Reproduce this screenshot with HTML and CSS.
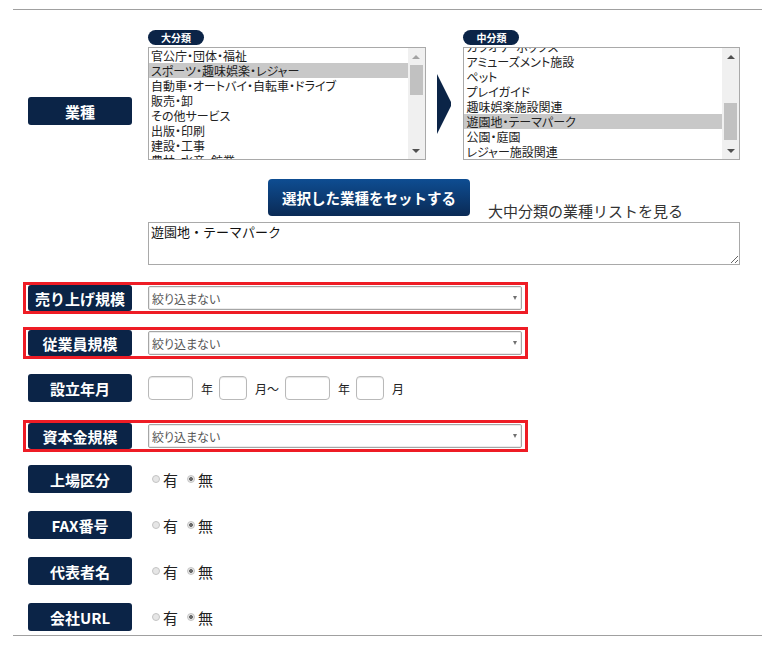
FILE: index.html
```html
<!DOCTYPE html>
<html lang="ja">
<head>
    <meta charset="UTF-8">
    <title>企業検索 条件</title>
    <link rel="stylesheet" href="styles.css">
</head>
<body>
    <form class="search-form">
        <!-- 業種 -->
        <div class="industry">
            <div class="field-label industry-label">業種</div>
            <div class="industry-body">
                <div class="lists">
                    <div class="list-group">
                        <span class="badge">大分類</span>
                        <div class="listbox">
                            <ul class="options">
                                <li>官公庁・団体・福祉</li>
                                <li class="selected">スポーツ・趣味娯楽・レジャー</li>
                                <li>自動車・オートバイ・自転車・ドライブ</li>
                                <li>販売・卸</li>
                                <li>その他サービス</li>
                                <li>出版・印刷</li>
                                <li>建設・工事</li>
                                <li>農林・水産・鉱業</li>
                            </ul>
                            <div class="scrollbar">
                                <span class="sb-btn up disabled"></span>
                                <div class="sb-track"><div class="sb-thumb thumb-top"></div></div>
                                <span class="sb-btn down"></span>
                            </div>
                        </div>
                    </div>

                    <svg class="arrow" width="15" height="60" viewBox="0 0 15 60">
                        <path d="M0 0 L15 30 L0 60 Z" fill="#0b2447"></path>
                    </svg>

                    <div class="list-group list-group-mid">
                        <span class="badge">中分類</span>
                        <div class="listbox">
                            <ul class="options options-mid">
                                <li>カラオケ・ボックス</li>
                                <li>アミューズメント施設</li>
                                <li>ペット</li>
                                <li>プレイガイド</li>
                                <li>趣味娯楽施設関連</li>
                                <li class="selected">遊園地・テーマパーク</li>
                                <li>公園・庭園</li>
                                <li>レジャー施設関連</li>
                            </ul>
                            <div class="scrollbar">
                                <span class="sb-btn up"></span>
                                <div class="sb-track"><div class="sb-thumb thumb-mid"></div></div>
                                <span class="sb-btn down"></span>
                            </div>
                        </div>
                    </div>
                </div>

                <div class="set-row">
                    <button type="button" class="set-btn">選択した業種をセットする</button>
                    <a class="list-link">大中分類の業種リストを見る</a>
                </div>

                <textarea class="industry-text">遊園地・テーマパーク</textarea>
            </div>
        </div>

        <!-- 売り上げ規模 -->
        <div class="field-row hl row-sales">
            <div class="field-label">売り上げ規模</div>
            <div class="select-wrap">
                <select><option>絞り込まない</option></select>
            </div>
        </div>

        <!-- 従業員規模 -->
        <div class="field-row hl row-staff">
            <div class="field-label">従業員規模</div>
            <div class="select-wrap">
                <select><option>絞り込まない</option></select>
            </div>
        </div>

        <!-- 設立年月 -->
        <div class="field-row row-founded">
            <div class="field-label">設立年月</div>
            <div class="date-range">
                <input type="text" class="num year">
                <span class="unit">年</span>
                <input type="text" class="num month">
                <span class="unit">月～</span>
                <input type="text" class="num year">
                <span class="unit">年</span>
                <input type="text" class="num month">
                <span class="unit">月</span>
            </div>
        </div>

        <!-- 資本金規模 -->
        <div class="field-row hl row-capital">
            <div class="field-label">資本金規模</div>
            <div class="select-wrap">
                <select><option>絞り込まない</option></select>
            </div>
        </div>

        <div class="field-row row-first-radio">
            <div class="field-label">上場区分</div>
            <label class="choice"><input type="radio" name="listed">有</label>
            <label class="choice"><input type="radio" name="listed" checked>無</label>
        </div>

        <div class="field-row">
            <div class="field-label">FAX番号</div>
            <label class="choice"><input type="radio" name="fax">有</label>
            <label class="choice"><input type="radio" name="fax" checked>無</label>
        </div>

        <div class="field-row">
            <div class="field-label">代表者名</div>
            <label class="choice"><input type="radio" name="ceo">有</label>
            <label class="choice"><input type="radio" name="ceo" checked>無</label>
        </div>

        <div class="field-row">
            <div class="field-label">会社URL</div>
            <label class="choice"><input type="radio" name="url">有</label>
            <label class="choice"><input type="radio" name="url" checked>無</label>
        </div>
    </form>
</body>
</html>
```

FILE: styles.css
```css
/* Base */
* {
    box-sizing: border-box;
}

body {
    margin: 0;
    background: #ffffff;
    color: #333333;
    font-family: "Noto Sans CJK JP", "Noto Sans", sans-serif;
}

.search-form {
    margin: 9px 11px 0 13px;
    border-top: 1px solid #a0a0a0;
    border-bottom: 1px solid #a0a0a0;
    padding-bottom: 4px;
}

/* Labels */
.field-label {
    flex-shrink: 0;
    width: 104px;
    height: 28px;
    display: flex;
    align-items: center;
    justify-content: center;
    background: #0b2447;
    color: #ffffff;
    border-radius: 3px;
    font-size: 15px;
    font-weight: bold;
}

/* Industry section */
.industry {
    display: flex;
    align-items: flex-start;
    padding: 20px 0 0 15px;
}

.industry-label {
    margin-top: 67px;
}

.industry-body {
    margin-left: 16px;
    width: 592px;
}

.lists {
    display: flex;
    align-items: flex-start;
}

.list-group {
    width: 278px;
}

.list-group-mid {
    width: 277px;
    margin-left: 12px;
}

.arrow {
    display: block;
    margin: 44px 0 0 11px;
}

.badge {
    display: block;
    width: 56px;
    height: 15px;
    border-radius: 8px;
    background: #0b2447;
    color: #ffffff;
    font-size: 10px;
    font-weight: bold;
    line-height: 15px;
    text-align: center;
}

.listbox {
    display: flex;
    height: 113px;
    margin-top: 2px;
    border: 1px solid #a9a9a9;
    overflow: hidden;
}

.options {
    flex: 1;
    align-self: flex-start;
    list-style: none;
    margin: 0;
    padding: 0;
    font-size: 12px;
    color: #222222;
    font-feature-settings: "palt";
}

.options li {
    height: 15px;
    line-height: 15px;
    padding-left: 2px;
    white-space: nowrap;
}

.options li.selected {
    background: #c8c8c8;
}

.options-mid {
    margin-top: -9px;
}

/* Fake scrollbar */
.scrollbar {
    width: 17px;
    flex-shrink: 0;
    display: flex;
    flex-direction: column;
    background: #f0f0f0;
}

.sb-btn {
    height: 17px;
    display: flex;
    align-items: center;
    justify-content: center;
}

.sb-btn::before {
    content: "";
    border-left: 4px solid transparent;
    border-right: 4px solid transparent;
}

.sb-btn.up::before {
    border-bottom: 4px solid #505050;
}

.sb-btn.down::before {
    border-top: 4px solid #505050;
}

.sb-btn.up.disabled::before {
    border-bottom-color: #a3a3a3;
}

.sb-track {
    flex: 1;
}

.sb-thumb {
    margin: 0 2px;
    background: #c1c1c1;
}

.thumb-top {
    height: 30px;
}

.thumb-mid {
    margin-top: 38px;
    height: 37px;
}

.set-row {
    display: flex;
    align-items: flex-end;
    margin-top: 19px;
    padding-left: 120px;
}

.set-btn {
    width: 202px;
    height: 37px;
    border: none;
    border-radius: 4px;
    background: linear-gradient(#0e4d92, #0a2a55);
    color: #ffffff;
    font-family: inherit;
    font-size: 14.5px;
    font-weight: bold;
    padding: 0;
}

.list-link {
    margin: 0 0 -5px 18px;
    font-size: 15px;
    line-height: 20px;
    color: #333333;
}

.industry-text {
    display: block;
    width: 592px;
    height: 43px;
    margin-top: 6px;
    padding: 1px 2px;
    border: 1px solid #a9a9a9;
    font-family: inherit;
    font-size: 13px;
    line-height: 16px;
    color: #111111;
}

/* Field rows */
.field-row {
    display: flex;
    align-items: center;
    margin-top: 18px;
    padding-left: 15px;
}

.field-row.hl {
    width: 505px;
    margin-left: 10px;
    padding: 0 3px 0 2px;
    border: 3px solid #ee1c25;
}

.field-row.hl .field-label {
    height: 26px;
}

.row-sales { margin-top: 17px; }
.row-staff { margin-top: 13px; }
.row-founded { margin-top: 15px; }
.row-capital { margin-top: 18px; }
.row-first-radio { margin-top: 13px; }

.select-wrap {
    position: relative;
    width: 374px;
    margin-left: 16px;
}

.select-wrap select {
    appearance: none;
    -webkit-appearance: none;
    display: block;
    width: 100%;
    height: 24px;
    padding: 0 3px;
    border: 1px solid #a6a6a6;
    border-radius: 2px;
    box-shadow: inset 0 0 0 1px #ececec;
    background: #ffffff;
    font-family: inherit;
    font-size: 12px;
    color: #555555;
    font-feature-settings: "palt";
}

.select-wrap::after {
    content: "";
    position: absolute;
    right: 5px;
    top: 10px;
    border-left: 2.5px solid transparent;
    border-right: 2.5px solid transparent;
    border-top: 4px solid #707070;
}

/* Date range */
.date-range {
    display: flex;
    align-items: center;
    margin-left: 16px;
}

.num {
    height: 24px;
    border: 1px solid #b9b9b9;
    border-radius: 4px;
    box-shadow: inset 0 1px 1px #e4e4e4;
    padding: 0 3px;
}

.num.year {
    width: 45px;
}

.num.month {
    width: 28px;
}

.unit {
    margin: 0 6px 0 8px;
    font-size: 12px;
    color: #222222;
}

/* Radios */
.choice {
    display: flex;
    align-items: center;
    font-size: 15px;
    color: #222222;
}

.choice:first-of-type {
    margin-left: 20px;
}

.choice + .choice {
    margin-left: 9px;
}

.choice input {
    appearance: none;
    -webkit-appearance: none;
    width: 8px;
    height: 8px;
    margin: 0 3px 0 0;
    border: 1px solid #c4c4c4;
    border-radius: 50%;
    background: #e6e6e6;
}

.choice input:checked {
    background: radial-gradient(circle, #6a6a6a 0 1.6px, #e6e6e6 2.2px);
}
```
